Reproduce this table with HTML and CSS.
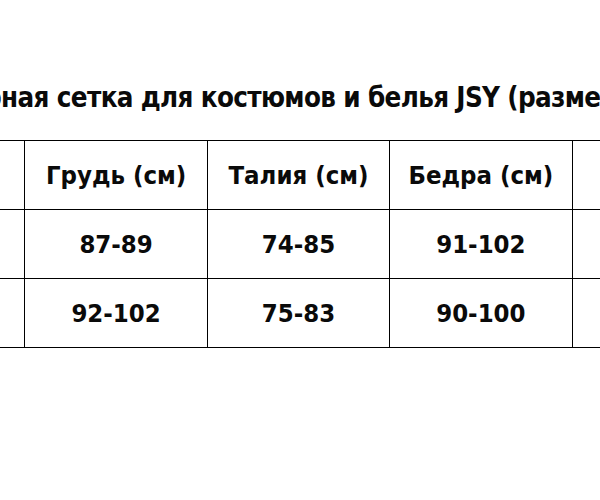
FILE: index.html
```html
<!DOCTYPE html>
<html lang="ru">
<head>
<meta charset="utf-8">
<title>Размерная сетка JSY</title>
<link rel="stylesheet" href="styles.css">
</head>
<body>
<div class="sheet">
  <h1 class="title">Размерная сетка для костюмов и белья JSY (размеры)</h1>
  <table class="grid">
    <tr>
      <th>Размер</th>
      <th>Грудь (см)</th>
      <th>Талия (см)</th>
      <th>Бедра (см)</th>
      <th>Рост (см)</th>
    </tr>
    <tr>
      <td>S</td>
      <td>87-89</td>
      <td>74-85</td>
      <td>91-102</td>
      <td>160-170</td>
    </tr>
    <tr>
      <td>M</td>
      <td>92-102</td>
      <td>75-83</td>
      <td>90-100</td>
      <td>165-175</td>
    </tr>
  </table>
</div>
</body>
</html>
```
FILE: styles.css
```css
html, body {
  margin: 0;
  padding: 0;
  background: #fff;
  overflow: hidden;
}
body {
  width: 600px;
  height: 500px;
  font-family: "DejaVu Sans Condensed", "DejaVu Sans", sans-serif;
  font-stretch: condensed;
  color: #0a0a0a;
}
.sheet {
  width: 913px;
  margin-left: -158px;
  padding-top: 80px;
}
.title {
  margin: 0;
  padding-right: 46px;
  height: 60px;
  font-size: 27.5px;
  font-weight: bold;
  letter-spacing: -0.65px;
  line-height: 34px;
  text-align: center;
  white-space: nowrap;
}
.grid {
  border-collapse: collapse;
  table-layout: fixed;
  width: 913px;
}
.grid th, .grid td {
  border: 1px solid #000;
  height: 68px;
  padding: 0;
  text-align: center;
  vertical-align: middle;
  font-size: 25.5px;
  font-weight: bold;
}
```
